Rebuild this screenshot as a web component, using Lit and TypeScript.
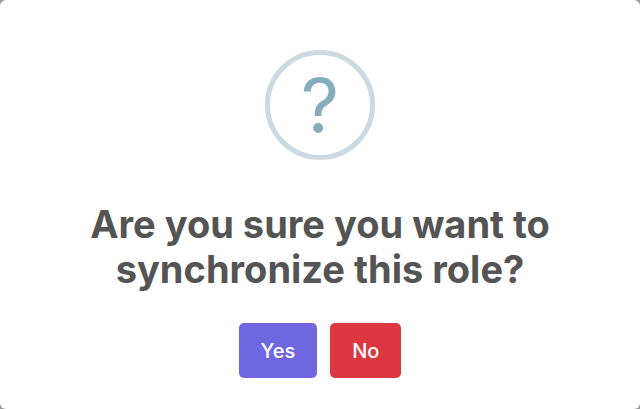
import { LitElement, html, css } from "lit";
import { customElement } from "lit/decorators.js";

@customElement("app-root")
export class AppRoot extends LitElement {
  static styles = css`
    :host {
      display: block;
      min-height: 100vh;
      background: #999999;
      font-family: Inter, "Liberation Sans", sans-serif;
    }
    .dialog {
      box-sizing: border-box;
      min-height: 100vh;
      padding: 50px 32px 31px;
      border-radius: 6px;
      background: #ffffff;
      display: flex;
      flex-direction: column;
      align-items: center;
    }
    .icon {
      box-sizing: border-box;
      width: 110px;
      height: 110px;
      padding-top: 2px;
      border: 5px solid #c9dae1;
      border-radius: 50%;
      display: flex;
      align-items: center;
      justify-content: center;
      color: #87adbd;
      font-size: 75px;
      line-height: 100px;
    }
    .title {
      margin: 42px 0 0;
      max-width: 500px;
      color: #545454;
      font-size: 38px;
      line-height: 45px;
      font-weight: 700;
      text-align: center;
    }
    .actions {
      display: flex;
      gap: 13px;
      margin-top: 31px;
    }
    .button {
      height: 55px;
      padding: 0 22px;
      border: 0;
      border-radius: 5px;
      color: #ffffff;
      font-family: inherit;
      font-size: 20px;
      font-weight: 500;
    }
    .confirm {
      background: #7066e0;
    }
    .deny {
      background: #dc3741;
    }
  `;

  render() {
    return html`
      <main class="dialog" role="dialog" aria-labelledby="title">
        <div class="icon" aria-hidden="true">?</div>
        <h2 class="title" id="title">Are you sure you want to synchronize this role?</h2>
        <div class="actions">
          <button class="button confirm" type="button">Yes</button>
          <button class="button deny" type="button">No</button>
        </div>
      </main>
    `;
  }
}
